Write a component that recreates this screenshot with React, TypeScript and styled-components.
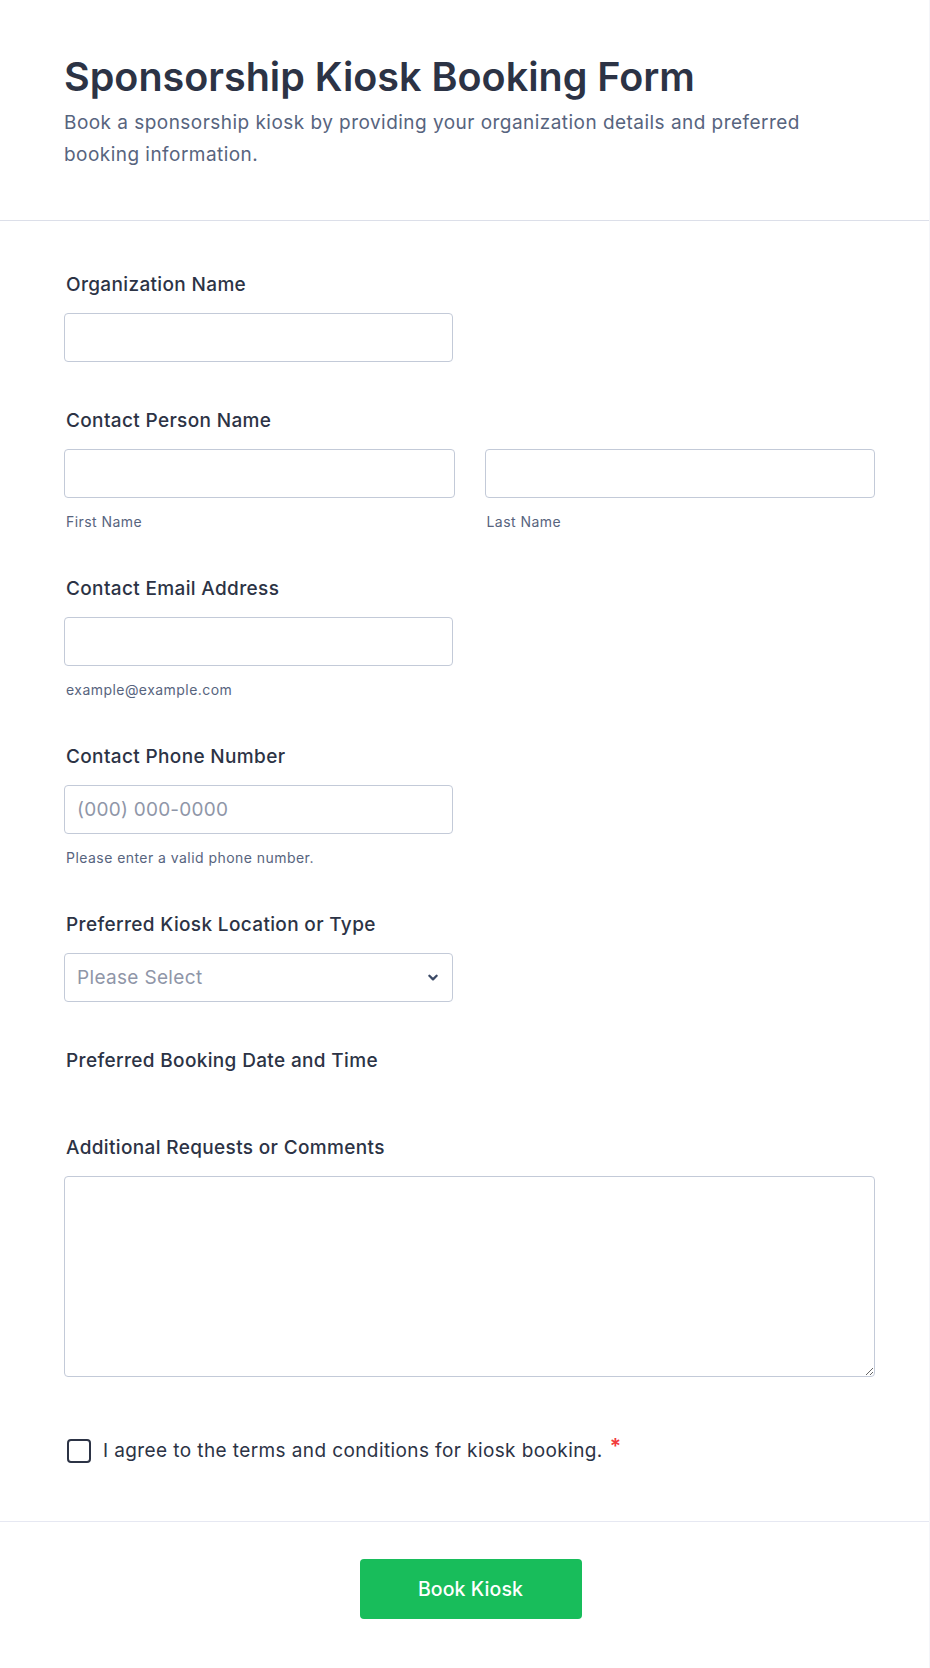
import React from "react";
import styled, { createGlobalStyle } from "styled-components";

const GlobalStyle = createGlobalStyle`
  html, body { margin: 0; padding: 0; background: #ffffff; }
  body { font-family: Inter, "Noto Sans", Arial, sans-serif; color: #2c3345; }
  * { box-sizing: border-box; }
`;

const Page = styled.div`
  width: 930px;
  min-height: 1668px;
  background: #ffffff;
  border-right: 1px solid #f4f5f9;
  display: flex;
  flex-direction: column;
`;

const Header = styled.header`
  padding: 54px 54px 49px 64px;
  border-bottom: 1px solid #dcdfe9;
`;

const Title = styled.h1`
  margin: 0;
  font-size: 39.5px;
  line-height: 47px;
  font-weight: 600;
  color: #2c3345;
`;

const Subtitle = styled.p`
  margin: 6px 0 0;
  max-width: 780px;
  font-size: 19px;
  line-height: 32px;
  letter-spacing: 0.46px;
  font-weight: 400;
  color: #57647e;
`;

const FormBody = styled.div`
  padding: 51px 54px 56px 64px;
  display: flex;
  flex-direction: column;
  gap: 46px;
`;

const Field = styled.div<{ $top?: number }>`
  display: flex;
  flex-direction: column;
  padding-top: ${(p) => p.$top ?? 0}px;
`;

const Label = styled.label<{ $after?: number }>`
  display: block;
  padding-left: 2px;
  margin-bottom: ${(p) => p.$after ?? 16}px;
  font-size: 19px;
  line-height: 25px;
  letter-spacing: 0.35px;
  font-weight: 500;
  color: #2c3345;
`;

const Row = styled.div`
  display: grid;
  grid-template-columns: 1fr 1fr;
  column-gap: 30px;
`;

const Column = styled.div`
  display: flex;
  flex-direction: column;
`;

const TextInput = styled.input<{ $full?: boolean }>`
  width: ${(p) => (p.$full ? "100%" : "389px")};
  height: 49px;
  padding: 0 12px;
  border: 1px solid #c3cad8;
  border-radius: 4px;
  background: #ffffff;
  font-family: Inter, "Noto Sans", Arial, sans-serif;
  font-size: 19px;
  letter-spacing: 0.25px;
  color: #2c3345;
  outline: none;
  &::placeholder { color: #8f96a8; opacity: 1; }
`;

const SubLabel = styled.span`
  display: block;
  margin-top: 16px;
  padding-left: 2px;
  font-size: 14px;
  line-height: 16px;
  letter-spacing: 0.45px;
  color: #57647e;
`;

const SelectBox = styled.div`
  width: 389px;
  height: 49px;
  border: 1px solid #c3cad8;
  border-radius: 4px;
  background: #ffffff;
  display: flex;
  align-items: center;
  justify-content: space-between;
  padding: 0 14px 0 12px;
`;

const SelectText = styled.span`
  font-size: 19px;
  letter-spacing: 0.33px;
  color: #8f96a8;
`;

const TextArea = styled.textarea`
  width: 100%;
  height: 201px;
  border: 1px solid #c3cad8;
  border-radius: 4px;
  padding: 10px 12px;
  font-family: Inter, "Noto Sans", Arial, sans-serif;
  font-size: 18px;
  color: #2c3345;
  resize: vertical;
  outline: none;
  display: block;
`;

const CheckRow = styled.label`
  display: flex;
  align-items: center;
  gap: 12px;
  padding-left: 3px;
  font-size: 19px;
  line-height: 28px;
  letter-spacing: 0.4px;
  color: #2c3345;
`;

const CheckBox = styled.span`
  width: 24px;
  height: 24px;
  flex: 0 0 24px;
  border: 2px solid #2c3345;
  border-radius: 4px;
  background: #ffffff;
`;

const Required = styled.span`
  color: #f23a3c;
  font-size: 21px;
  line-height: 1;
  margin-left: 7px;
  position: relative;
  top: -3px;
  font-weight: 600;
`;

const Footer = styled.div`
  border-top: 1px solid #e6e8f2;
  padding: 37px 54px 49px 66px;
  display: flex;
  justify-content: center;
`;

const SubmitButton = styled.button`
  width: 222px;
  height: 60px;
  border: none;
  border-radius: 4px;
  background: #18bd5b;
  color: #ffffff;
  font-family: Inter, "Noto Sans", Arial, sans-serif;
  font-size: 19.5px;
  letter-spacing: 0.1px;
  font-weight: 500;
  cursor: pointer;
`;

const Chevron = () => (
  <svg width="10" height="8" viewBox="0 0 10 8" fill="none">
    <path d="M1.4 1.8 L5 5.4 L8.6 1.8" stroke="#3b4a66" strokeWidth="2.3" strokeLinecap="round" strokeLinejoin="round" />
  </svg>
);

export default function App() {
  return (
    <>
      <GlobalStyle />
      <Page>
        <Header>
          <Title>Sponsorship Kiosk Booking Form</Title>
          <Subtitle>
            Book a sponsorship kiosk by providing your organization details and preferred booking information.
          </Subtitle>
        </Header>
        <FormBody>
          <Field>
            <Label>Organization Name</Label>
            <TextInput type="text" />
          </Field>
          <Field>
            <Label>Contact Person Name</Label>
            <Row>
              <Column>
                <TextInput type="text" $full />
                <SubLabel>First Name</SubLabel>
              </Column>
              <Column>
                <TextInput type="text" $full />
                <SubLabel>Last Name</SubLabel>
              </Column>
            </Row>
          </Field>
          <Field>
            <Label>Contact Email Address</Label>
            <TextInput type="email" />
            <SubLabel>example@example.com</SubLabel>
          </Field>
          <Field>
            <Label>Contact Phone Number</Label>
            <TextInput type="tel" placeholder="(000) 000-0000" />
            <SubLabel>Please enter a valid phone number.</SubLabel>
          </Field>
          <Field>
            <Label>Preferred Kiosk Location or Type</Label>
            <SelectBox>
              <SelectText>Please Select</SelectText>
              <Chevron />
            </SelectBox>
          </Field>
          <Field>
            <Label $after={16}>Preferred Booking Date and Time</Label>
          </Field>
          <Field>
            <Label>Additional Requests or Comments</Label>
            <TextArea />
          </Field>
          <Field $top={14}>
            <CheckRow>
              <CheckBox />
              <span>
                I agree to the terms and conditions for kiosk booking.
                <Required>*</Required>
              </span>
            </CheckRow>
          </Field>
        </FormBody>
        <Footer>
          <SubmitButton type="button">Book Kiosk</SubmitButton>
        </Footer>
      </Page>
    </>
  );
}
